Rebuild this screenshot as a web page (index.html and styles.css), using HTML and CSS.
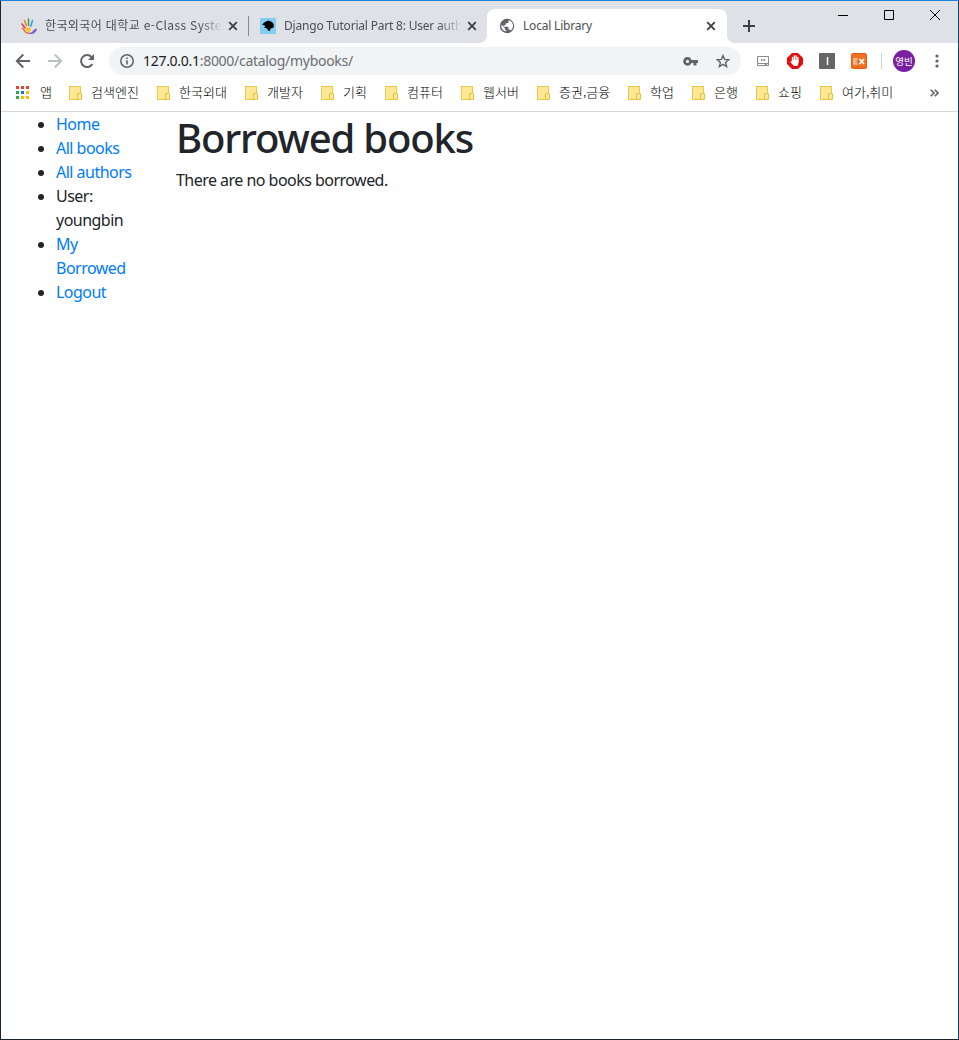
FILE: index.html
```html
<!DOCTYPE html>
<html lang="ko">
<head>
<meta charset="utf-8">
<title>Local Library</title>
<link rel="stylesheet" href="styles.css">
</head>
<body>
<div class="window">
  <header class="tabstrip">
    <div class="tab tab-first">
      <svg class="favicon" width="16" height="17" viewBox="0 0 16 17" fill="none" stroke-linecap="round">
        <path d="M1 6l3 4" stroke="#e8404a" stroke-width="1.6"/><path d="M3.500 2.500l1.800 5" stroke="#f08a24" stroke-width="1.600"/><path d="M7.500 1v6.500" stroke="#3aa655" stroke-width="1.600"/><path d="M11.500 2.500l-1.700 5.500" stroke="#3b9ad9" stroke-width="1.600"/>
        <circle cx="7.500" cy="11.500" r="2.300" fill="#ffc10e"/><path d="M1.500 10l3 4.200 3 1" stroke="#f0742b" stroke-width="1.500"/><path d="M8.500 15.500c4 0 3-4 7-4.500-1 3-2 5-7 4.500z" fill="#7d5bd0" stroke="#7d5bd0"/>
      </svg>
      <span class="tab-title t1">한국외국어 대학교 e-Class Syste</span>
      <svg class="close" width="10" height="10" viewBox="0 0 10 10"><path d="M1.200 1.200l7.600 7.600M8.800 1.200l-7.600 7.600"/></svg>
    </div>
    <span class="tab-divider"></span>
    <div class="tab tab-second">
      <svg class="favicon" width="16" height="16" viewBox="0 0 16 16"><path fill="#83cff2" d="M0 0h16v16H0z"/><path fill="#000" d="M2 6.500L5 4l3-1.500 3 1 2 1.500 1 3-1 2-2.500.5-.5 2.500-2-.5-1-2L4 9.500 5.500 8z"/></svg>
      <span class="tab-title t2">Django Tutorial Part 8: User auth</span>
      <svg class="close" width="10" height="10" viewBox="0 0 10 10"><path d="M1.200 1.200l7.600 7.600M8.800 1.200l-7.600 7.600"/></svg>
    </div>
    <div class="tab tab-active">
      <svg class="favicon" width="16" height="16" viewBox="0 0 16 16"><circle cx="8" cy="8" r="7.200" fill="#5f6368"/><path fill="#fff" d="M9.500 2.200v1.600c0 .8-.7 1.400-1.400 1.400H6.700v1.400c0 .4-.3.700-.7.700H4.600v1.400h4.200c.4 0 .7.300.7.700v2.100h.7c.6 0 1.100.4 1.300 1a5.700 5.700 0 0 0-2-10.300zM2.400 6.700l3.500 3.500v.7c0 .8.600 1.400 1.400 1.400v1.300A5.700 5.700 0 0 1 2.400 6.700z"/></svg>
      <span class="tab-title t3">Local Library</span>
      <svg class="close" width="10" height="10" viewBox="0 0 10 10"><path d="M1.200 1.200l7.600 7.600M8.800 1.200l-7.600 7.600"/></svg>
    </div>
    <svg class="new-tab" width="12" height="12" viewBox="0 0 12 12"><path d="M6 0v12M0 6h12" stroke="#3c4043" stroke-width="2"/></svg>
    <div class="window-controls">
      <svg width="10" height="10" viewBox="0 0 10 10"><path d="M0 5.500h10"/></svg>
      <svg width="10" height="10" viewBox="0 0 10 10"><path d="M.5.5h9v9h-9z"/></svg>
      <svg width="10" height="10" viewBox="0 0 10 10"><path d="M0 0l10 10M10 0L0 10"/></svg>
    </div>
  </header>

  <nav class="toolbar">
    <svg class="nav-icon" width="16" height="16" viewBox="0 0 16 16"><path d="M15 8H2M8.300 1.500L1.800 8l6.500 6.500" fill="none" stroke="#5f6368" stroke-width="1.900"/></svg>
    <svg class="nav-icon" width="16" height="16" viewBox="0 0 16 16"><path d="M1 8h13M7.700 1.500L14.200 8l-6.500 6.500" fill="none" stroke="#bcbec0" stroke-width="1.900"/></svg>
    <svg class="nav-icon" width="16" height="16" viewBox="0 0 16 16"><path d="M13.300 11A6 6 0 1 1 12.500 4" fill="none" stroke="#5f6368" stroke-width="2"/><path d="M15 1v6H9z" fill="#5f6368"/></svg>
    <div class="omnibox">
      <svg class="info" width="14" height="14" viewBox="0 0 14 14"><circle cx="7" cy="7" r="6.200" fill="none" stroke="#5f6368" stroke-width="1.500"/><path d="M6.200 6.200h1.600v4.300H6.200zM6.200 3.500h1.600v1.600H6.200z" fill="#5f6368"/></svg>
      <span class="url"><b>127.0.0.1</b>:8000/catalog/mybooks/</span>
      <svg class="key" width="15" height="9" viewBox="0 0 15 9"><path fill="#5f6368" fill-rule="evenodd" d="M4.500 0a4.300 4.300 0 0 1 4 3H15v3h-1.500v2.500h-3V6h-2a4.300 4.300 0 1 1-4-6zm0 2.800a1.600 1.600 0 1 0 0 3.200 1.600 1.600 0 0 0 0-3.200z"/></svg>
      <svg class="star" width="14" height="14" viewBox="0 0 14 14"><path d="M7 1.500l1.600 3.900 4.200.3-3.200 2.700 1 4.100L7 10.300l-3.600 2.200 1-4.100L1.200 5.700l4.200-.3z" fill="none" stroke="#5f6368" stroke-width="1.400"/></svg>
    </div>
    <div class="extensions">
      <svg width="16" height="16" viewBox="0 0 16 16"><path d="M2.500 3.500h11v9h-11zM2.500 10.500h11" fill="none" stroke="#8b8b8b"/><path d="M6.500 6v2M8 6v2M9.500 6v2" stroke="#8b8b8b"/><path d="M10 11.500h2" stroke="#8b8b8b"/></svg>
      <svg width="16" height="16" viewBox="0 0 16 16"><path fill="#e40d0d" d="M5 0h6l5 5v6l-5 5H5l-5-5V5z"/><path d="M5.500 8V4.500M7.300 8V3M9.100 8V3M10.900 9V4.500" stroke="#fff" stroke-width="1.400" stroke-linecap="round"/><path fill="#fff" d="M4.800 7h6.800v2.500L10.500 13H7l-4-4.300 1-.5 1 .8z"/></svg>
      <svg width="16" height="16" viewBox="0 0 16 16"><rect width="16" height="16" rx="1" fill="#666"/><path d="M8.500 4v8" stroke="#fff" stroke-width="1.500"/></svg>
      <svg width="16" height="16" viewBox="0 0 16 16"><rect width="16" height="16" rx="2.500" fill="#e55b13"/><rect x="1" y="1" width="14" height="14" rx="2" fill="#f37021"/><path d="M6.500 6H3v5h3.500M3 8.500h3" fill="none" stroke="#ffd5b8" stroke-width="1.300"/><path d="M8.500 6l4.500 5M13 6l-4.500 5" stroke="#fff" stroke-width="1.700"/></svg>
    </div>
    <span class="toolbar-divider"></span>
    <span class="avatar">영빈</span>
    <svg class="menu" width="4" height="14" viewBox="0 0 4 14" fill="#5f6368"><circle cx="2" cy="2" r="1.600"/><circle cx="2" cy="7" r="1.600"/><circle cx="2" cy="12" r="1.600"/></svg>
  </nav>

  <nav class="bookmarks">
    <svg class="apps" width="13" height="13" viewBox="0 0 13 13"><path fill="#ea4335" d="M0 0h3v3H0zM5 0h3v3H5zM10 0h3v3h-3z"/><path fill="#34a853" d="M0 5h3v3H0zM0 10h3v3H0z"/><path fill="#1a73e8" d="M5 5h3v3H5z"/><path fill="#fbbc05" d="M10 5h3v3h-3zM5 10h3v3H5zM10 10h3v3h-3z"/></svg>
    <span class="apps-label">앱</span>
    <span class="bookmark w4"><i class="folder"></i><span>검색엔진</span></span>
    <span class="bookmark w4"><i class="folder"></i><span>한국외대</span></span>
    <span class="bookmark w3"><i class="folder"></i><span>개발자</span></span>
    <span class="bookmark w2"><i class="folder"></i><span>기획</span></span>
    <span class="bookmark w3"><i class="folder"></i><span>컴퓨터</span></span>
    <span class="bookmark w3"><i class="folder"></i><span>웹서버</span></span>
    <span class="bookmark w5"><i class="folder"></i><span>증권,금융</span></span>
    <span class="bookmark w2"><i class="folder"></i><span>학업</span></span>
    <span class="bookmark w2"><i class="folder"></i><span>은행</span></span>
    <span class="bookmark w2"><i class="folder"></i><span>쇼핑</span></span>
    <span class="bookmark w5"><i class="folder"></i><span>여가,취미</span></span>
    <svg class="overflow" width="9" height="8" viewBox="0 0 9 8"><path d="M.7.700L4 4 .7 7.300M4.700.700L8 4 4.700 7.300" fill="none" stroke="#5f6368" stroke-width="1.600"/></svg>
  </nav>

  <div class="page">
    <ul class="sidebar">
      <li><a>Home</a></li>
      <li><a>All books</a></li>
      <li><a>All authors</a></li>
      <li>User:<br>youngbin</li>
      <li><a>My<br>Borrowed</a></li>
      <li><a>Logout</a></li>
    </ul>
    <main class="content">
      <h1>Borrowed books</h1>
      <p>There are no books borrowed.</p>
    </main>
  </div>
</div>
</body>
</html>
```
FILE: styles.css
```css
* { box-sizing: border-box; }
body { margin: 0; background: #fff; }
svg { display: block; flex: none; }
.window {
  width: 959px;
  height: 1040px;
  border: 1px solid #1b2530;
  border-top-color: #1883d7;
  border-right-color: #18435c;
  background: #fff;
  font-family: "Noto Sans", "Noto Sans CJK KR", sans-serif;
  overflow: hidden;
}

/* Tab strip */
.tabstrip {
  display: flex;
  height: 42px;
  padding: 8px 0 0 8px;
  background: #dee1e6;
}
.tab {
  display: flex;
  align-items: center;
  height: 34px;
  padding-left: 12px;
  font-size: 12px;
  color: #4c5054;
  white-space: nowrap;
}
.tab-first { width: 239px; }
.tab-second { width: 238px; padding-left: 11px; }
.tab-active {
  position: relative;
  width: 240px;
  border-radius: 8px 8px 0 0;
  background: #fff;
}
.tab-active::before,
.tab-active::after {
  content: "";
  position: absolute;
  bottom: 0;
  width: 8px;
  height: 8px;
}
.tab-active::before { left: -8px; background: radial-gradient(circle at 0 0, #dee1e6 7.5px, #fff 8.5px); }
.tab-active::after { right: -8px; background: radial-gradient(circle at 100% 0, #dee1e6 7.5px, #fff 8.5px); }
.tab-divider { width: 1px; height: 20px; margin: 7px 0 0; background: #888b90; }
.tab-title { width: 176px; margin: 0 7px 0 8px; overflow: hidden; line-height: 20px; }
.t1, .t2 {
  -webkit-mask-image: linear-gradient(90deg, #000 155px, transparent 178px);
  mask-image: linear-gradient(90deg, #000 155px, transparent 178px);
}
.t1 { font-family: "Noto Sans CJK KR", sans-serif; letter-spacing: .38px; line-height: 18px; padding-bottom: 2px; }
.t2 { letter-spacing: -.2px; }
.t3 { letter-spacing: -.2px; }
.close path { stroke: #3c4043; stroke-width: 1.8; }
.new-tab { margin: 11px 0 0 16px; }
.window-controls {
  display: flex;
  gap: 36px;
  margin: 1px 18px 0 auto;
  align-items: flex-start;
}
.window-controls path { fill: none; stroke: #000; }

/* Toolbar */
.toolbar { display: flex; align-items: center; height: 37px; padding: 0 19px 1px 14px; }
.nav-icon { margin-right: 16px; }
.omnibox {
  display: flex;
  align-items: center;
  width: 632px;
  height: 28px;
  margin-left: -2px;
  padding: 0 11px;
  border-radius: 14px;
  background: #f1f3f4;
}
.url { margin-left: 9px; font-size: 14px; line-height: 20px; color: #6a6e72; letter-spacing: -.29px; }
.url b { font-weight: 400; color: #202124; }
.key { margin-left: auto; }
.star { margin-left: 18px; }
.extensions { display: flex; gap: 16px; margin-left: 14px; }
.toolbar-divider { width: 1px; height: 16px; margin: 0 11px 0 14px; background: #cfd1d4; }
.avatar {
  display: grid;
  place-items: center;
  width: 22px;
  height: 22px;
  border-radius: 50%;
  background: #7b1fa2;
  color: #fff;
  font: 9.5px/20px "Noto Sans CJK KR", sans-serif;
  white-space: nowrap;
}
.menu { margin-left: auto; }

/* Bookmarks bar */
.bookmarks {
  display: flex;
  align-items: center;
  height: 32px;
  padding: 0 19px 6px 15px;
  border-bottom: 1px solid #d5d7d9;
  font: 300 13px/20px "Noto Sans CJK KR", sans-serif;
  color: #000;
  white-space: nowrap;
}
.apps-label { width: 12px; margin: 0 17px 0 11px; padding-bottom: 2px; }
.bookmark { display: flex; align-items: center; gap: 10px; flex: none; }
.bookmark span { padding-bottom: 2px; }
.w2 { width: 64px; }
.w3 { width: 76px; }
.w4 { width: 88px; }
.w5 { width: 91px; }
.folder {
  position: relative;
  width: 12px;
  height: 14px;
  border: 1px solid #ecc94b;
  background: #ffe793;
}
.folder::after {
  content: "";
  position: absolute;
  right: -2px;
  bottom: -1px;
  width: 3px;
  height: 5px;
  border: 1px solid #e8c13c;
  border-radius: 1px;
  background: #ffe793;
}
.overflow { margin-left: auto; }

/* Page content */
.page {
  display: flex;
  font-family: "Noto Sans", "Open Sans", sans-serif;
  font-size: 16px;
  line-height: 24px;
  color: #212529;
}
.sidebar { width: 145px; margin: 0; padding-left: 55px; letter-spacing: -.52px; }
.sidebar a { color: #007bff; }
.content { padding: 2px 0 0 30px; }
.content h1 { margin: 0 0 6px; font-size: 40px; font-weight: 500; line-height: 48px; letter-spacing: -1.15px; }
.content p { margin: 0; letter-spacing: -.53px; }
```
